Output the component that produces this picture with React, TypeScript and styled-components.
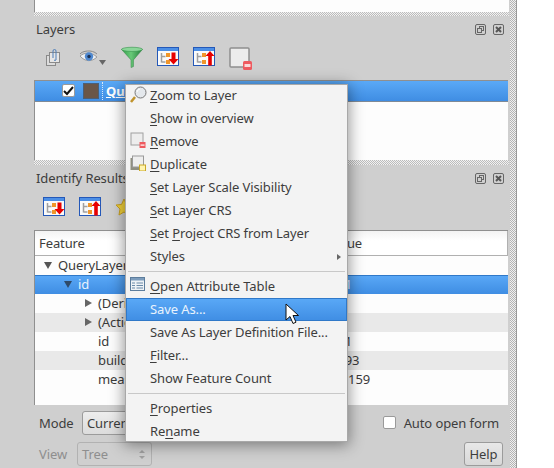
import React from 'react'
import styled, { createGlobalStyle } from 'styled-components'

const GlobalStyle = createGlobalStyle`
  html, body {
    margin: 0;
    padding: 0;
    background: #fff;
    overflow: hidden;
  }
  * { box-sizing: border-box; }
`

const panelBg = '#cfcfcf'
const selected = 'linear-gradient(#5aa9f7, #3f8de3)'
const font = `"Noto Sans", "Open Sans", sans-serif`

const Page = styled.div`
  width: 554px;
  height: 468px;
  position: relative;
  overflow: hidden;
  background: #fff;
  font-family: ${font};
  font-size: 13px;
  letter-spacing: -0.1px;
  color: #3d3d3d;
  display: flex;
`

const Main = styled.div`
  width: 517px;
  height: 468px;
  padding-left: 34px;
  background: ${panelBg};
  border-right: 1px solid #999;
  display: flex;
`

const Docks = styled.div`
  width: 475px;
  display: flex;
  flex-direction: column;
`

const SideGrip = styled.div`
  flex: 1;
  margin-left: 1px;
  background: repeating-conic-gradient(#f0f0f0 0 25%, #b4b4b4 0 50%) 0 0 / 2px 2px;
`

const Grip = styled.div<{ $h: number }>`
  height: ${p => p.$h}px;
  flex: none;
  background: repeating-conic-gradient(#f2f2f2 0 25%, #bcbcbc 0 50%) 0 0 / 2px 2px;
`

const TopRest = styled.div`
  height: 12px;
  background: #fdfdfd;
  border-left: 1px solid #8f8f8f;
`

const DockTitle = styled.div`
  height: 28px;
  display: flex;
  align-items: center;
  justify-content: space-between;
  padding: 0 5px 2px 2px;
`

const TitleButtons = styled.div`
  display: flex;
  gap: 7px;
  padding-top: 2px;
`

const Toolbar = styled.div<{ $h: number; $gap: number; $pad: number }>`
  height: ${p => p.$h}px;
  display: flex;
  align-items: center;
  gap: ${p => p.$gap}px;
  padding-left: ${p => p.$pad}px;
  padding-bottom: 8px;
`

const LayerTree = styled.div`
  height: 80px;
  margin-right: 1px;
  background: #fdfdfd;
  border-top: 1px solid #8f8f8f;
  border-left: 1px solid #8f8f8f;
  margin-top: 1px;
`

const LayerRow = styled.div`
  height: 21px;
  background: ${selected};
  border-bottom: 1px solid #7f8a96;
  display: flex;
  align-items: center;
  padding-left: 27px;
`

const Check = styled.span`
  width: 13px;
  height: 13px;
  background: #fff;
  border: 1px solid #9a9a9a;
  border-radius: 2px;
  display: flex;
  align-items: center;
  justify-content: center;
`

const Swatch = styled.span`
  width: 16px;
  height: 16px;
  margin-left: 8px;
  background: #6a5648;
  border: 1px solid #4a5f78;
`

const LayerName = styled.span`
  margin-left: 3px;
  padding-left: 3px;
  border-left: 1px dotted #d8e8f8;
  color: #fff;
  font-weight: 700;
  text-decoration: underline;
`

const TreeBox = styled.div`
  height: 176px;
  background: #fdfdfd;
  border-left: 1px solid #8f8f8f;
  border-top: 1px solid #8f8f8f;
  margin-right: 1px;
`

const TreeHeader = styled.div`
  height: 25px;
  background: linear-gradient(#f3f3f3, #fff 40%);
  border-bottom: 1px solid #b0b0b0;
  border-right: 1px solid #b0b0b0;
  display: grid;
  grid-template-columns: 290px 1fr;
  align-items: center;
  padding-left: 4px;
`

const HeaderCell = styled.span``

const TreeRow = styled.div<{ $sel?: boolean; $alt?: boolean }>`
  height: 19px;
  display: grid;
  grid-template-columns: 290px 1fr;
  align-items: center;
  color: ${p => (p.$sel ? '#e8f2fd' : '#3a3a3a')};
  background: ${p => (p.$sel ? selected : p.$alt ? '#e9e9e9' : '#fdfdfd')};
  ${p => p.$sel && 'box-shadow: inset 0 1px 0 #2f78c8;'}
`

const TreeCell = styled.span<{ $indent: number }>`
  display: flex;
  align-items: center;
  gap: 6px;
  padding-left: ${p => p.$indent}px;
`

const Arrow = styled.span<{ $open?: boolean; $sel?: boolean }>`
  width: 0;
  height: 0;
  ${p =>
    p.$open
      ? `border-left: 4.5px solid transparent;
         border-right: 4.5px solid transparent;
         border-top: 7px solid ${p.$sel ? '#2f4a68' : '#555'};`
      : `border-top: 4.5px solid transparent;
         border-bottom: 4.5px solid transparent;
         border-left: 7px solid #666;`}
`

const ValueCell = styled.span`
  padding-left: 5px;
`

const FormRow = styled.div<{ $h: number }>`
  height: ${p => p.$h}px;
  display: flex;
  align-items: center;
  padding: 0 5px 0 5px;
`

const RowLabel = styled.span<{ $off?: boolean }>`
  width: ${p => (p.$off ? 38 : 43)}px;
  color: ${p => (p.$off ? '#8e8e8e' : '#3d3d3d')};
`

const Combo = styled.div<{ $w: number; $off?: boolean }>`
  width: ${p => p.$w}px;
  height: 24px;
  padding: 0 4px;
  display: flex;
  align-items: center;
  justify-content: space-between;
  border: 1px solid ${p => (p.$off ? '#b2b2b2' : '#9b9b9b')};
  border-radius: 3px;
  background: ${p => (p.$off ? panelBg : 'linear-gradient(#ededed, #dcdcdc)')};
  color: ${p => (p.$off ? '#8e8e8e' : '#3d3d3d')};
`

const Spin = styled.span`
  display: flex;
  flex-direction: column;
  gap: 3px;
  margin-right: 2px;
`

const SpinArrow = styled.span<{ $down?: boolean }>`
  width: 0;
  height: 0;
  border-left: 3px solid transparent;
  border-right: 3px solid transparent;
  ${p => (p.$down ? 'border-top: 3px solid #a0a0a0;' : 'border-bottom: 3px solid #a0a0a0;')}
`

const AutoOpen = styled.label`
  margin-left: auto;
  margin-right: 5px;
  display: flex;
  align-items: center;
  gap: 8px;
`

const EmptyBox = styled.span`
  width: 13px;
  height: 13px;
  background: #fff;
  border: 1px solid #9a9a9a;
  border-radius: 2px;
`

const HelpButton = styled.button`
  margin-left: auto;
  margin-right: 1px;
  width: 39px;
  height: 24px;
  padding: 0;
  font: inherit;
  letter-spacing: inherit;
  color: #3d3d3d;
  border: 1px solid #9b9b9b;
  border-radius: 3px;
  background: linear-gradient(#e8e8e8, #d8d8d8);
`

const Menu = styled.div`
  position: absolute;
  left: 125px;
  top: 84px;
  width: 223px;
  height: 358px;
  padding: 0 1px;
  background: #f3f3f3;
  border: 1px solid #a8a8a8;
  box-shadow: 0 2px 14px 1px rgba(0, 0, 0, 0.42);
`

const MenuItem = styled.div<{ $active?: boolean }>`
  height: 23px;
  display: flex;
  align-items: center;
  position: relative;
  padding: 0 0 2px 24px;
  margin: 0 -1px;
  color: ${p => (p.$active ? '#e9f3fd' : '#3d3d3d')};
  ${p => p.$active && `
    background: ${selected};
    box-shadow: inset 0 0 0 1px #2f78c8;
  `}

  &:first-child {
    margin-top: -1px;
  }

  u {
    text-underline-offset: 2px;
  }
`

const MenuIcon = styled.span`
  position: absolute;
  left: 4px;
  top: 2px;
  width: 18px;
  height: 18px;
  display: flex;
`

const SubArrow = styled.span`
  position: absolute;
  right: 6px;
  top: 9px;
  width: 0;
  height: 0;
  border-top: 3px solid transparent;
  border-bottom: 3px solid transparent;
  border-left: 4px solid #666;
`

const Separator = styled.div`
  height: 1px;
  margin: 3px 1px 3px;
  background: #c8c8c8;
`

const Pointer = styled.svg`
  position: absolute;
  left: 285px;
  top: 303px;
`

const WinButton = ({ kind }: { kind: 'float' | 'close' }) => (
  <svg width="11" height="11" viewBox="0 0 11 11">
    <rect x="0.5" y="0.5" width="10" height="10" rx="1.5" fill="none" stroke="#666" />
    {kind === 'float' ? (
      <>
        <rect x="4.5" y="2.5" width="4" height="4" fill="none" stroke="#666" />
        <rect x="2.5" y="4.5" width="4" height="4" fill="#cfcfcf" stroke="#666" />
      </>
    ) : (
      <path d="M3 3l5 5M8 3l-5 5" stroke="#555" strokeWidth="2" />
    )}
  </svg>
)

const TreeIcon = ({ up }: { up?: boolean }) => (
  <svg width="22" height="20" viewBox="0 0 22 20">
    <rect x="0.5" y="0.5" width="21" height="18" fill="#fafafa" stroke="#2458b8" />
    <rect x="1" y="1" width="20" height="3" fill="#4c8fe6" />
    <path d="M4.500 6v9.500M4.500 9.500h4M4.500 15h4" stroke="#a0a0a0" strokeWidth="1.500" fill="none" />
    <rect x="9" y="6" width="4" height="4" fill="#f0962a" />
    <rect x="9" y="13" width="4" height="4" fill="#f0962a" />
    {up ? (
      <path d="M17 4l-4.500 5h2.700v9.500h3.600V9h2.700z" fill="#e80000" />
    ) : (
      <path d="M14.500 5.500h4v6.500h3l-5 5.500-5-5.500h3z" fill="#e80000" />
    )}
  </svg>
)

const GroupIcon = () => (
  <svg width="19" height="17" viewBox="0 0 19 17">
    <rect x="0.500" y="6.500" width="9" height="10" fill="#dcdcdc" stroke="#8a8a8a" />
    <rect x="3.500" y="3.500" width="10" height="10" fill="#e6e6e6" stroke="#8a8a8a" />
    <path d="M7 9V2a1.500 1.500 0 013 0v9a1.500 1.500 0 01-2 0" fill="none" stroke="#4f7fb8" />
  </svg>
)

const EyeIcon = () => (
  <svg width="28" height="17" viewBox="0 0 28 17">
    <path d="M1 5c2-3 12-5 17 0" fill="none" stroke="#8a8a8a" />
    <path d="M1 7c5-4 11-4 17 1-5 5-12 5-17-1z" fill="#eef1f4" stroke="#9a9a9a" />
    <circle cx="10" cy="7.500" r="4.200" fill="#4f88cf" />
    <circle cx="10" cy="7.500" r="1.700" fill="#1d3355" />
    <path d="M20 11h7l-3.500 5z" fill="#666" />
  </svg>
)

const FunnelIcon = () => (
  <svg width="22" height="23" viewBox="0 0 23 23">
    <defs>
      <linearGradient id="funnelFill" x1="0" y1="0" x2="1" y2="0">
        <stop offset="0" stopColor="#2f9c48" />
        <stop offset="0.45" stopColor="#68c978" />
        <stop offset="1" stopColor="#1f7c38" />
      </linearGradient>
    </defs>
    <path d="M0.500 3l10 11v8l2.500-1V14L22.500 3z" fill="url(#funnelFill)" stroke="#3b8a4c" strokeWidth="0.600" />
    <ellipse cx="11.500" cy="3" rx="11" ry="2.200" fill="#8bd699" stroke="#3e9a52" strokeWidth="0.700" />
  </svg>
)

const RemoveIcon = () => (
  <svg width="24" height="28" viewBox="0 -4 24 28">
    <rect x="1" y="1" width="19" height="19" rx="1" fill="#ececec" stroke="#8f8f8f" strokeWidth="1.500" />
    <rect x="14" y="14" width="9" height="9" rx="1.500" fill="#ee5a5f" />
    <rect x="15.500" y="17" width="6" height="3" fill="#fbd8d8" />
  </svg>
)

const MagnifierIcon = () => (
  <svg width="18" height="18" viewBox="0 0 18 18">
    <path d="M5 11L1 16" stroke="#c0932c" strokeWidth="2.500" />
    <circle cx="10.500" cy="6.500" r="5.500" fill="#e4e8ec" stroke="#777" />
    <path d="M7 6a3.500 3.500 0 013-3" fill="none" stroke="#fff" />
  </svg>
)

const MenuRemoveIcon = () => (
  <svg width="16" height="16" viewBox="0 0 16 16">
    <rect x="1" y="1" width="12" height="12" fill="#ededed" stroke="#a0a0a0" />
    <rect x="9.500" y="10" width="6" height="6" fill="#ee5a5f" />
    <rect x="10.500" y="12.500" width="4" height="1.200" fill="#fff" />
  </svg>
)

const DuplicateIcon = () => (
  <svg width="16" height="16" viewBox="0 0 16 16">
    <rect x="0.500" y="3" width="11" height="12" fill="#8f8f80" />
    <rect x="2.500" y="1" width="11" height="11" fill="#eeeeee" stroke="#999" />
    <rect x="9.500" y="10" width="6" height="6" fill="#fff4b0" stroke="#c9a826" />
  </svg>
)

const TableIcon = () => (
  <svg width="15" height="14" viewBox="0 0 15 14">
    <rect x="0.500" y="0.500" width="14" height="13" fill="#eef2f6" stroke="#5d7d9c" />
    <rect x="1" y="1" width="13" height="2.500" fill="#7c9cbc" />
    <path d="M2 6h3M6.500 6h6.500M2 8.500h3M6.500 8.500h6.500M2 11h3M6.500 11h6.500" stroke="#6a8aa8" />
  </svg>
)

const StarIcon = () => (
  <svg width="18" height="18" viewBox="0 0 18 18">
    <path d="M9 1l2.500 5.500L17 7l-4 4 1 6-5-3-5 3 1-6-4-4 5.500-.5z" fill="#f3d23a" stroke="#c8a020" />
  </svg>
)

const treeRows = [
  { label: 'QueryLayer', indent: 9, arrow: 'open', value: '' },
  { label: 'id', indent: 29, arrow: 'open', sel: true, value: '141' },
  { label: '(Derived)', indent: 50, arrow: 'closed', value: '' },
  { label: '(Actions)', indent: 50, arrow: 'closed', alt: true, value: '' },
  { label: 'id', indent: 63, value: '141' },
  { label: 'building', indent: 63, alt: true, value: '1093' },
  { label: 'measure', indent: 63, value: '27.159' },
]

const App: React.FC = () => {
  return (
    <>
      <GlobalStyle />
      <Page>
        <Main>
          <Docks>
            <TopRest />
            <Grip $h={4} />
            <DockTitle>
              Layers
              <TitleButtons>
                <WinButton kind="float" />
                <WinButton kind="close" />
              </TitleButtons>
            </DockTitle>
            <Toolbar $h={35} $gap={14} $pad={12}>
              <GroupIcon />
              <EyeIcon />
              <FunnelIcon />
              <TreeIcon />
              <TreeIcon up />
              <RemoveIcon />
            </Toolbar>
            <LayerTree>
              <LayerRow>
                <Check>
                  <svg width="11" height="11" viewBox="0 0 11 11">
                    <path d="M1 6l3 3 6-7" fill="none" stroke="#111" strokeWidth="2" />
                  </svg>
                </Check>
                <Swatch />
                <LayerName>QueryLayer</LayerName>
              </LayerRow>
            </LayerTree>
            <Grip $h={5} />
            <DockTitle>
              Identify Results
              <TitleButtons>
                <WinButton kind="float" />
                <WinButton kind="close" />
              </TitleButtons>
            </DockTitle>
            <Toolbar $h={37} $gap={14} $pad={9}>
              <TreeIcon />
              <TreeIcon up />
              <StarIcon />
            </Toolbar>
            <TreeBox>
              <TreeHeader>
                <HeaderCell>Feature</HeaderCell>
                <HeaderCell>Value</HeaderCell>
              </TreeHeader>
              {treeRows.map((r, i) => (
                <TreeRow key={i} $sel={r.sel} $alt={r.alt}>
                  <TreeCell $indent={r.indent}>
                    {r.arrow && <Arrow $open={r.arrow === 'open'} $sel={r.sel} />}
                    {r.label}
                  </TreeCell>
                  <ValueCell>{r.value}</ValueCell>
                </TreeRow>
              ))}
            </TreeBox>
            <FormRow $h={35}>
              <RowLabel>Mode</RowLabel>
              <Combo $w={120}>Current layer</Combo>
              <AutoOpen>
                <EmptyBox />
                Auto open form
              </AutoOpen>
            </FormRow>
            <FormRow $h={28}>
              <RowLabel $off>View</RowLabel>
              <Combo $w={75} $off>
                Tree
                <Spin>
                  <SpinArrow />
                  <SpinArrow $down />
                </Spin>
              </Combo>
              <HelpButton>Help</HelpButton>
            </FormRow>
          </Docks>
          <SideGrip />
        </Main>

        <Menu>
          <MenuItem><MenuIcon><MagnifierIcon /></MenuIcon><span><u>Z</u>oom to Layer</span></MenuItem>
          <MenuItem><span><u>S</u>how in overview</span></MenuItem>
          <MenuItem><MenuIcon><MenuRemoveIcon /></MenuIcon><span><u>R</u>emove</span></MenuItem>
          <MenuItem><MenuIcon><DuplicateIcon /></MenuIcon><span><u>D</u>uplicate</span></MenuItem>
          <MenuItem><span><u>S</u>et Layer Scale Visibility</span></MenuItem>
          <MenuItem><span><u>S</u>et Layer CRS</span></MenuItem>
          <MenuItem><span><u>S</u>et <u>P</u>roject CRS from Layer</span></MenuItem>
          <MenuItem>Styles<SubArrow /></MenuItem>
          <Separator />
          <MenuItem><MenuIcon><TableIcon /></MenuIcon><span><u>O</u>pen Attribute Table</span></MenuItem>
          <MenuItem $active>Save As...</MenuItem>
          <MenuItem>Save As Layer Definition File...</MenuItem>
          <MenuItem><span><u>F</u>ilter...</span></MenuItem>
          <MenuItem>Show Feature Count</MenuItem>
          <Separator />
          <MenuItem><span><u>P</u>roperties</span></MenuItem>
          <MenuItem><span>Re<u>n</u>ame</span></MenuItem>
        </Menu>

        <Pointer width="15" height="22" viewBox="0 0 15 22">
          <path d="M1 1v16l4-3.500 3 7 3-1.300-3-6.700h5.500z" fill="#fff" stroke="#111" />
        </Pointer>
      </Page>
    </>
  )
}

export default App
